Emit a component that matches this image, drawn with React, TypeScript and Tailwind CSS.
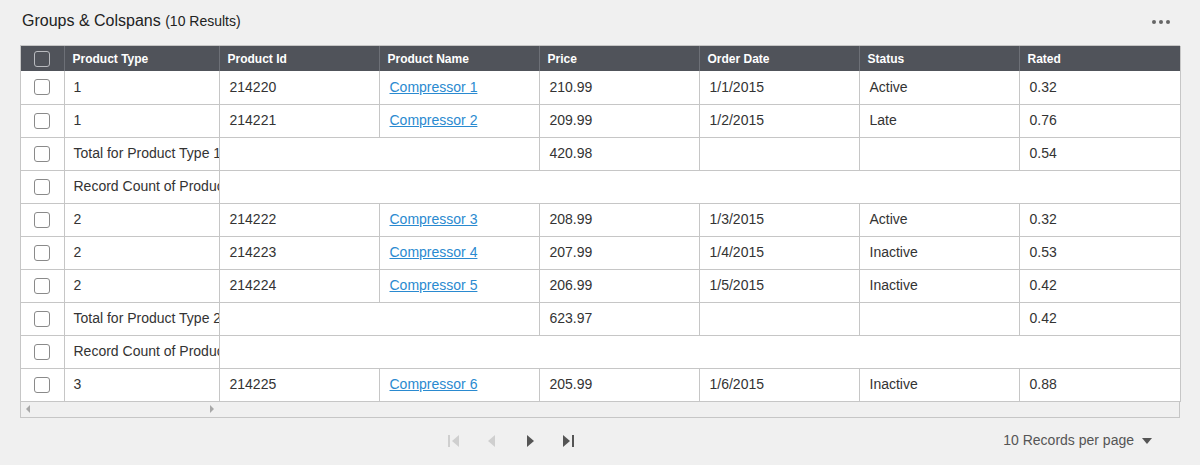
import React from 'react'

type Row =
  | { kind: 'data'; type: string; id: string; name: string; price: string; date: string; status: string; rated: string }
  | { kind: 'total'; label: string; price: string; rated: string }
  | { kind: 'count'; label: string }

const rows: Row[] = [
  { kind: 'data', type: '1', id: '214220', name: 'Compressor 1', price: '210.99', date: '1/1/2015', status: 'Active', rated: '0.32' },
  { kind: 'data', type: '1', id: '214221', name: 'Compressor 2', price: '209.99', date: '1/2/2015', status: 'Late', rated: '0.76' },
  { kind: 'total', label: 'Total for Product Type 1', price: '420.98', rated: '0.54' },
  { kind: 'count', label: 'Record Count of Product Type 1: 2' },
  { kind: 'data', type: '2', id: '214222', name: 'Compressor 3', price: '208.99', date: '1/3/2015', status: 'Active', rated: '0.32' },
  { kind: 'data', type: '2', id: '214223', name: 'Compressor 4', price: '207.99', date: '1/4/2015', status: 'Inactive', rated: '0.53' },
  { kind: 'data', type: '2', id: '214224', name: 'Compressor 5', price: '206.99', date: '1/5/2015', status: 'Inactive', rated: '0.42' },
  { kind: 'total', label: 'Total for Product Type 2', price: '623.97', rated: '0.42' },
  { kind: 'count', label: 'Record Count of Product Type 2: 3' },
  { kind: 'data', type: '3', id: '214225', name: 'Compressor 6', price: '205.99', date: '1/6/2015', status: 'Inactive', rated: '0.88' },
]

const headers = ['Product Type', 'Product Id', 'Product Name', 'Price', 'Order Date', 'Status', 'Rated']

function Check({ dark = false }: { dark?: boolean }) {
  return (
    <span
      className={`block w-4 h-4 mx-auto rounded-[3px] border ${
        dark ? 'border-[#b9bbbf] bg-[#50535a]' : 'border-[#8a8a8a] bg-white'
      }`}
    />
  )
}

const td = 'h-[33px] border-r border-b border-[#c6c6c6] px-[10px] whitespace-nowrap overflow-hidden'
const first = 'h-[33px] border-r border-b border-[#c6c6c6] px-[9px] whitespace-nowrap overflow-hidden text-clip'

export default function App() {
  return (
    <div
      className="w-[1200px] h-[465px] bg-[#f0f0f0] text-[#333] overflow-hidden"
      style={{ fontFamily: '"Liberation Sans", Arial, sans-serif' }}
    >
      {/* Title bar */}
      <div className="flex items-center justify-between h-[42px] pl-[22px] pr-[30px]">
        <h1 className="text-[16px] text-[#222]">
          Groups &amp; Colspans <span className="text-[14px]">(10 Results)</span>
        </h1>
        <div className="flex gap-[3px] pt-px">
          {[0, 1, 2].map((i) => (
            <span key={i} className="w-1 h-1 rounded-full bg-[#666]" />
          ))}
        </div>
      </div>

      {/* Grid */}
      <div className="mx-5 mt-[3px] border border-[#c6c6c6] border-r-0 border-b-0">
        <table className="table-fixed border-collapse w-[1159px] bg-white text-[14px]">
          <colgroup>
            <col className="w-[43px]" />
            <col className="w-[155px]" />
            <col className="w-[160px]" />
            <col className="w-[160px]" />
            <col className="w-[160px]" />
            <col className="w-[160px]" />
            <col className="w-[160px]" />
            <col className="w-[161px]" />
          </colgroup>
          <thead>
            <tr className="bg-[#50535a] text-white text-[12px] font-bold h-[25px]">
              <th className="border-r border-[#6d7077] p-0">
                <Check dark />
              </th>
              {headers.map((h, i) => (
                <th
                  key={h}
                  className={`text-left px-2 font-bold border-[#6d7077] ${i < headers.length - 1 ? 'border-r' : 'border-r border-r-[#c6c6c6]'}`}
                >
                  {h}
                </th>
              ))}
            </tr>
          </thead>
          <tbody>
            {rows.map((r, i) => (
              <tr key={i}>
                <td className={`${td} px-0`}>
                  <Check />
                </td>
                {r.kind === 'data' && (
                  <>
                    <td className={first}>{r.type}</td>
                    <td className={td}>{r.id}</td>
                    <td className={td}>
                      <a href="#" className="text-[#2a8ad0] underline">
                        {r.name}
                      </a>
                    </td>
                    <td className={td}>{r.price}</td>
                    <td className={td}>{r.date}</td>
                    <td className={td}>{r.status}</td>
                    <td className={td}>{r.rated}</td>
                  </>
                )}
                {r.kind === 'total' && (
                  <>
                    <td className={first}>{r.label}</td>
                    <td className={td} colSpan={2} />
                    <td className={td}>{r.price}</td>
                    <td className={td} />
                    <td className={td} />
                    <td className={td}>{r.rated}</td>
                  </>
                )}
                {r.kind === 'count' && (
                  <>
                    <td className={first}>{r.label}</td>
                    <td className={td} colSpan={6} />
                  </>
                )}
              </tr>
            ))}
          </tbody>
        </table>
        {/* horizontal scrollbar */}
        <div className="h-4 bg-[#f0f0f0] border-r border-b border-[#c6c6c6] flex items-center pl-[5px]">
          <span className="w-0 h-0 border-y-[4px] border-y-transparent border-r-[4px] border-r-[#a8a8a8]" />
          <span className="ml-[180px] w-0 h-0 border-y-[4px] border-y-transparent border-l-[4px] border-l-[#a8a8a8]" />
        </div>
      </div>

      {/* Pager */}
      <div className="relative flex items-center h-[44px] mx-5 mt-px pl-[427px]">
        <div className="flex items-center gap-[24px]">
          <svg width="14" height="14" viewBox="0 0 14 14">
            <rect x="1" y="1" width="2" height="12" fill="#cfcfcf" />
            <path d="M12 1 L5 7 L12 13 Z" fill="#cfcfcf" />
          </svg>
          <svg width="14" height="14" viewBox="0 0 14 14">
            <path d="M10 1 L3 7 L10 13 Z" fill="#cfcfcf" />
          </svg>
          <svg width="14" height="14" viewBox="0 0 14 14">
            <path d="M4 1 L11 7 L4 13 Z" fill="#555" />
          </svg>
          <svg width="14" height="14" viewBox="0 0 14 14">
            <path d="M2 1 L9 7 L2 13 Z" fill="#555" />
            <rect x="11" y="1" width="2" height="12" fill="#555" />
          </svg>
        </div>
        <div className="absolute right-[28px] top-0 h-full flex items-center gap-[8px] text-[14px] text-[#555]">
          <span>10 Records per page</span>
          <span className="w-0 h-0 border-x-[5px] border-x-transparent border-t-[6px] border-t-[#555]" />
        </div>
      </div>
    </div>
  )
}
